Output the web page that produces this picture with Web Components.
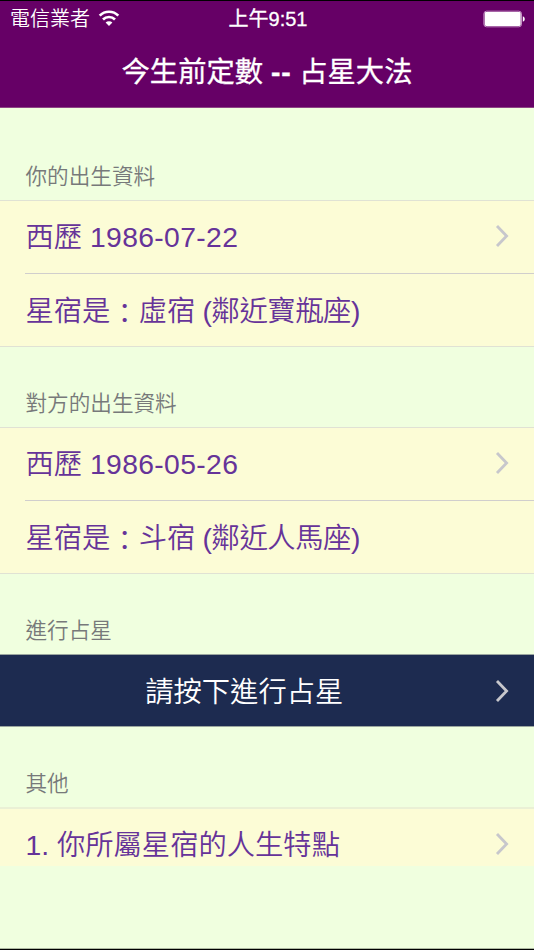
<!DOCTYPE html>
<html lang="zh-Hant">
<head>
<meta charset="UTF-8">
<meta name="viewport" content="width=device-width, initial-scale=1">
<title>今生前定數</title>
<style>
  body {
    margin: 0;
    background: #f0ffdf;
    font-family: "Liberation Sans", "Noto Sans CJK TC", sans-serif;
    font-weight: 350;
  }
  .date { letter-spacing: .35px; }
  .near { letter-spacing: -.4px; margin-left: -.7px; }
  .colon { line-height: 1; vertical-align: -3px; }
</style>
</head>
<body>
<star-app>
  <status-bar slot="header" carrier="電信業者" time="上午9:51"></status-bar>
  <nav-title slot="header">今生前定數 <b>--</b> 占星大法</nav-title>

  <list-section label="你的出生資料" style="--label-height: 92px">
    <list-row arrow>西歷 <span class="date">1986-07-22</span></list-row>
    <list-row>星宿是<span class="colon">：</span>虛宿 <span class="near">(鄰近寶瓶座)</span></list-row>
  </list-section>
  <list-section label="對方的出生資料">
    <list-row arrow>西歷 <span class="date">1986-05-26</span></list-row>
    <list-row>星宿是<span class="colon">：</span>斗宿 <span class="near">(鄰近人馬座)</span></list-row>
  </list-section>
  <list-section label="進行占星" dark>
    <list-row arrow action>請按下進行占星</list-row>
  </list-section>
  <list-section label="其他" last>
    <list-row arrow cut>1. 你所屬星宿的人生特點</list-row>
  </list-section>
</star-app>

<script>
// Page frame: purple header on top, grouped list below
class StarApp extends HTMLElement {
  constructor() {
    super();
    this.attachShadow({ mode: 'open' });
    this.shadowRoot.innerHTML = `
      <style>
        :host {
          display: flex;
          flex-direction: column;
          box-sizing: border-box;
          width: 534px;
          height: 950px;
          overflow: hidden;
          border-top: 1px solid #000;
          border-bottom: 1px solid #000;
          background: #f0ffdf;
        }
        header {
          height: 107px;
          box-sizing: border-box;
          flex: none;
          background: #660066;
          border-bottom: 1px solid #8e4585;
        }
        main { flex: 1; box-shadow: inset 0 -1px #adb8a1; }
      </style>
      <header><slot name="header"></slot></header>
      <main><slot></slot></main>
    `;
  }
}

class StatusBar extends HTMLElement {
  connectedCallback() {
    this.attachShadow({ mode: 'open' });
    this.shadowRoot.innerHTML = `
      <style>
        :host {
          display: grid;
          grid-template-columns: 1fr auto 1fr;
          align-items: center;
          height: 34px;
          padding: 0 9px 0 10px;
          color: #fff;
          font-size: 20px;
          line-height: 36px;
        }
        .left { display: flex; align-items: center; gap: 8px; }
        .left svg { margin-top: -2px; }
        .time { font-weight: 400; padding-left: 1px; -webkit-text-stroke: .3px #fff; }
        .battery { justify-self: end; }
        svg { display: block; }
      </style>
      <div class="left">
        <span>${this.getAttribute('carrier')}</span>
        <svg width="22" height="16" viewBox="0 0 22 16" fill="none" stroke="#fff" stroke-width="2.7">
          <path d="M1.7 5.6a13.2 13.2 0 0 1 18.6 0" />
          <path d="M5 9.5a8.5 8.5 0 0 1 12 0" />
          <path d="M11 16L7.6 12.6a4.8 4.8 0 0 1 6.8 0Z" fill="#fff" stroke="none" />
        </svg>
      </div>
      <div class="time">${this.getAttribute('time')}</div>
      <svg class="battery" width="42" height="18" viewBox="0 0 42 18">
        <rect x=".9" y="1.2" width="37.6" height="15.6" rx="2.6" fill="none" stroke="#c593c5" stroke-width="1" />
        <rect x="1.7" y="2" width="36" height="14" rx="1.4" fill="#fff" />
        <path d="M39.8 6.2c2.6 .8 2.6 4.8 0 5.6Z" fill="#fff" />
      </svg>
    `;
  }
}

class NavTitle extends HTMLElement {
  constructor() {
    super();
    this.attachShadow({ mode: 'open' });
    this.shadowRoot.innerHTML = `
      <style>
        :host {
          display: block;
          height: 72px;
          line-height: 74px;
          text-align: center;
          color: #fff;
          font-size: 28.3px;
          font-weight: 400;
          -webkit-text-stroke: .3px #fff;
        }
        ::slotted(b) { letter-spacing: .8px; }
      </style>
      <slot></slot>
    `;
  }
}

class ListSection extends HTMLElement {
  connectedCallback() {
    this.attachShadow({ mode: 'open' });
    this.shadowRoot.innerHTML = `
      <style>
        :host { display: block; }
        .label {
          box-sizing: border-box;
          height: var(--label-height, 80px);
          display: flex;
          align-items: flex-end;
          padding: 0 25.5px 7px;
          color: #77797a;
          font-size: 21.6px;
          line-height: 32px;
        }
        .rows {
          background: #fcfcd6;
          border-top: 1px solid #e0e2d4;
          border-bottom: 1px solid #e0e2d4;
        }
        ::slotted(list-row:not(:first-child)) { --divider: #d0cecd; }
        :host([dark]) .rows { background: #1d2b50; border-color: #9ba69f; }
        :host([last]) .rows { border-top: 2px solid #eaf0d5; border-bottom: 0; }
      </style>
      <div class="label">${this.getAttribute('label')}</div>
      <div class="rows"><slot></slot></div>
    `;
  }
}

class ListRow extends HTMLElement {
  connectedCallback() {
    this.attachShadow({ mode: 'open' });
    const arrow = this.hasAttribute('arrow')
      ? `<svg width="16" height="24" viewBox="0 0 16 24" fill="none" stroke="#c7c7cc" stroke-width="2.8">
           <path d="M2 2L11.6 12L2 22" />
         </svg>`
      : '';
    this.shadowRoot.innerHTML = `
      <style>
        :host {
          display: flex;
          align-items: center;
          height: 72px;
          margin-left: 25px;
          padding: 0 23.5px 0 .5px;
          color: #663399;
          font-size: 28.3px;
          line-height: 72px;
          white-space: nowrap;
        }
        :host(:not(:first-child)) { border-top: 1px solid var(--divider); }
        :host(:not(:first-child)) .text { padding-top: 2px; }
        :host([action]) { color: #fff; margin-left: 0; padding-left: 0; height: 71px; }
        :host([action]) .text { text-align: center; padding: 2px 6px 0 0; }
        :host([cut]) { height: 57px; }
        :host([cut]) .text { margin-top: 15px; }
        :host([cut]) svg { margin-top: 13px; }
        .text { flex: 1; }
        svg { flex: none; display: block; margin-top: -2px; }
        :host([action]) svg { margin-top: 0; }
      </style>
      <div class="text"><slot></slot></div>
      ${arrow}
    `;
  }
}

customElements.define('star-app', StarApp);
customElements.define('status-bar', StatusBar);
customElements.define('nav-title', NavTitle);
customElements.define('list-section', ListSection);
customElements.define('list-row', ListRow);
</script>
</body>
</html>
